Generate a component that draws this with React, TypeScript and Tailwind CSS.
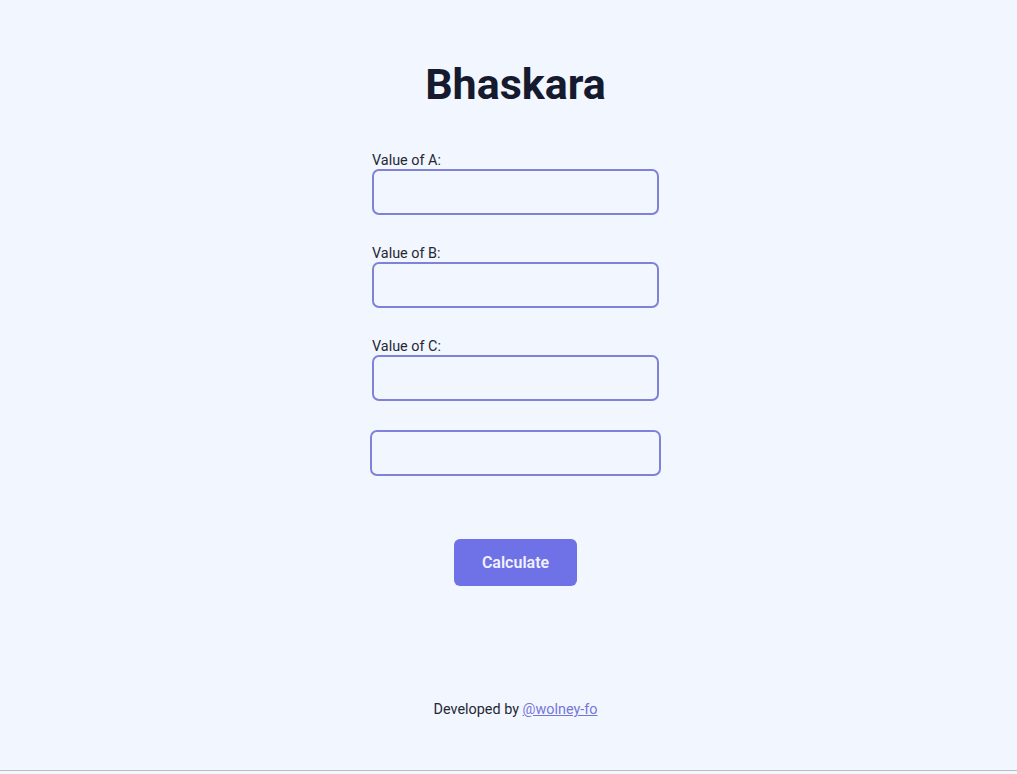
import { useState } from "react";

const FIELDS = ["A", "B", "C"];

export default function App() {
  const [values, setValues] = useState<Record<string, string>>({ A: "", B: "", C: "" });
  const [result, setResult] = useState("");

  const calculate = () => {
    const a = parseFloat(values.A);
    const b = parseFloat(values.B);
    const c = parseFloat(values.C);
    if ([a, b, c].some(Number.isNaN) || a === 0) {
      setResult("Invalid values");
      return;
    }
    const delta = b * b - 4 * a * c;
    if (delta < 0) {
      setResult("No real roots");
      return;
    }
    const x1 = (-b + Math.sqrt(delta)) / (2 * a);
    const x2 = (-b - Math.sqrt(delta)) / (2 * a);
    setResult(`x1 = ${x1}, x2 = ${x2}`);
  };

  return (
    <div className="h-[774px] bg-[#f2f6fe] font-['Roboto',sans-serif]">
      <div className="h-[771px] border-b border-[#b9bdc8] flex flex-col items-center pl-[14px]">
        <h1 className="mt-[58px] text-[43px] leading-[52px] font-bold text-[#161a2e]">
          Bhaskara
        </h1>

        {/* Inputs */}
        <div className="mt-[42px] flex flex-col gap-[30px] w-[287px]">
          {FIELDS.map((f) => (
            <label key={f} className="flex flex-col">
              <span className="text-[14.4px] leading-[17px] text-[#252836]">Value of {f}:</span>
              <input
                type="number"
                value={values[f]}
                onChange={(e) => setValues({ ...values, [f]: e.target.value })}
                className="h-[46px] w-[287px] rounded-[7px] border-2 border-[#8081d8] bg-transparent px-3 text-[16px] outline-none"
              />
            </label>
          ))}
        </div>

        {/* Result */}
        <input
          readOnly
          value={result}
          className="mt-[29px] h-[46px] w-[291px] rounded-[7px] border-2 border-[#8081d8] bg-transparent px-3 text-[16px] text-center outline-none"
        />

        <button
          onClick={calculate}
          className="mt-[63px] h-[47px] w-[123px] rounded-[6px] bg-[#6f71e6] text-[16px] font-semibold text-[#f1f2fd]"
        >
          Calculate
        </button>

        <footer className="mt-auto mb-[49px] text-[14.4px] text-[#252836]">
          Developed by{" "}
          <a href="#" className="text-[#7577d8] underline">
            @wolney-fo
          </a>
        </footer>
      </div>
    </div>
  );
}
